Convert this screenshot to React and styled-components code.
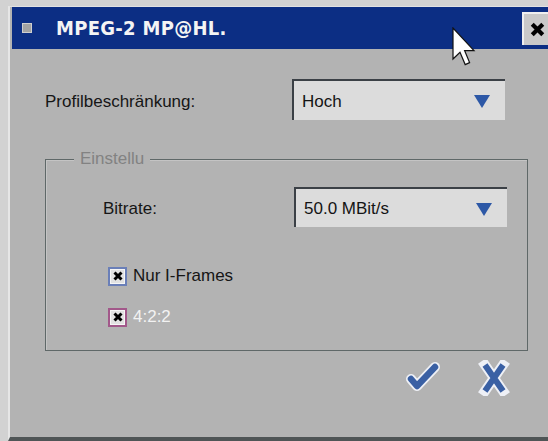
import styled, { createGlobalStyle } from "styled-components";

const GlobalStyle = createGlobalStyle`
  html, body {
    margin: 0;
    padding: 0;
    overflow: hidden;
    background: #d2d2d2;
  }
  body {
    font-family: "Liberation Sans", Arial, sans-serif;
  }
`;

const Window = styled.div`
  position: relative;
  margin: 6px 0 0 8px;
  width: 544px;
  height: 430px;
  padding-left: 2px;
  border-top: 1px solid #e2e2e2;
  border-left: 2px solid #e6e6e6;
  border-bottom: 4px solid #4f5556;
  background: #b3b3b3;
  display: flex;
  flex-direction: column;
`;

const TitleBar = styled.div`
  height: 42px;
  background: #0c2e84;
  display: flex;
  align-items: center;
  padding-left: 10px;
`;

const SysIcon = styled.span`
  width: 8px;
  height: 8px;
  background: #a3a3a3;
  border: 1px solid #cfcfcf;
`;

const Title = styled.h1`
  margin: 0 0 0 24px;
  font-family: "DejaVu Sans", sans-serif;
  font-stretch: condensed;
  font-weight: bold;
  font-size: 20px;
  color: #f4f4f4;
  letter-spacing: 0.3px;
`;

const CloseButton = styled.button`
  margin-left: auto;
  align-self: flex-start;
  margin-top: 5px;
  width: 34px;
  height: 33px;
  padding: 0 0 0 6px;
  display: flex;
  align-items: center;
  background: #c9c9c9;
  border: none;
  border-top: 2px solid #efefef;
  border-left: 2px solid #efefef;
`;

const Body = styled.div`
  flex: 1;
  padding: 30px 0 0 33px;
`;

const FieldRow = styled.div`
  display: grid;
  grid-template-columns: ${(p) => p.$labelWidth}px 213px;
  align-items: center;
`;

const Label = styled.span`
  font-size: 17px;
  color: #161616;
  padding-top: 4px;
`;

const Select = styled.div`
  height: ${(p) => p.$h}px;
  box-sizing: border-box;
  background: #dcdcdc;
  border-top: 2px solid #3b4046;
  border-left: 2px solid #3b4046;
  display: flex;
  align-items: center;
  justify-content: space-between;
  padding: 2px 15px 0 8px;
  font-size: 17px;
  color: #141414;
`;

const Arrow = styled.span`
  width: 0;
  height: 0;
  border-left: 8px solid transparent;
  border-right: 8px solid transparent;
  border-top: 13px solid #2d58a6;
`;

const Group = styled.div`
  position: relative;
  margin-top: 39px;
  box-sizing: border-box;
  width: 483px;
  height: 192px;
  border: 1px solid #5f6868;
  box-shadow: inset 1px 1px 0 #c4c4c4;
  padding: 27px 0 0 57px;
`;

const Legend = styled.span`
  position: absolute;
  top: -11px;
  left: 28px;
  padding: 0 6px;
  background: #b3b3b3;
  font-size: 17px;
  color: #828282;
`;

const Checks = styled.div`
  display: flex;
  flex-direction: column;
  gap: 21px;
  margin: 39px 0 0 5px;
`;

const CheckRow = styled.label`
  display: flex;
  align-items: center;
  gap: 6px;
  font-size: 17px;
  color: ${(p) => (p.$disabled ? "#f2f2f2" : "#161616")};
`;

const Box = styled.span`
  width: 15px;
  height: 15px;
  background: #e2e2e2;
  border: 2px solid ${(p) => p.$tone};
  box-shadow: inset 0 0 0 1px #f6f6f6;
  display: flex;
  align-items: center;
  justify-content: center;
`;

const Footer = styled.div`
  display: flex;
  align-items: flex-start;
  gap: 38px;
  margin: 9px 0 0 359px;
`;

const Cursor = styled.svg`
  position: absolute;
  left: 442px;
  top: 20px;
`;

function CrossMark({ size = 10, weight = 3 }) {
  return (
    <svg width={size} height={size} viewBox="0 0 10 10">
      <path d="M1.5 1.5 L8.5 8.5 M8.5 1.5 L1.5 8.5" stroke="#000" strokeWidth={weight} />
    </svg>
  );
}

function OkIcon() {
  return (
    <svg width="36" height="32" viewBox="0 0 36 32">
      <g fill="none" strokeLinecap="round" strokeLinejoin="round">
        <path d="M7 19 L13 26 L31 7" stroke="#eef0f6" strokeWidth="10" />
        <path d="M7 19 L13 26 L31 7" stroke="#3a60a4" strokeWidth="6.5" />
      </g>
    </svg>
  );
}

function CancelIcon() {
  return (
    <svg width="32" height="36" viewBox="0 0 32 36">
      <g stroke="#eef0f6" strokeWidth="10" strokeLinecap="square">
        <path d="M7 5 L25 31 M25 5 L7 31" />
      </g>
      <g stroke="#3a60a4" strokeWidth="6">
        <path d="M7 5 L25 31 M25 5 L7 31" />
      </g>
    </svg>
  );
}

export default function App() {
  return (
    <>
      <GlobalStyle />
      <Window>
        <TitleBar>
          <SysIcon />
          <Title>MPEG-2 MP@HL.</Title>
          <CloseButton aria-label="Schließen">
            <CrossMark size={15} weight={2.8} />
          </CloseButton>
        </TitleBar>
        <Body>
          <FieldRow $labelWidth={247}>
            <Label>Profilbeschränkung:</Label>
            <Select $h={41}>
              Hoch
              <Arrow />
            </Select>
          </FieldRow>
          <Group>
            <Legend>Einstellu</Legend>
            <FieldRow $labelWidth={191}>
              <Label>Bitrate:</Label>
              <Select $h={40}>
                50.0 MBit/s
                <Arrow />
              </Select>
            </FieldRow>
            <Checks>
              <CheckRow>
                <Box $tone="#6a7fb8">
                  <CrossMark />
                </Box>
                Nur I-Frames
              </CheckRow>
              <CheckRow $disabled>
                <Box $tone="#a2588a">
                  <CrossMark />
                </Box>
                4:2:2
              </CheckRow>
            </Checks>
          </Group>
          <Footer>
            <OkIcon />
            <CancelIcon />
          </Footer>
        </Body>
        <Cursor width="24" height="40" viewBox="0 0 12 20">
          <path
            d="M0.5 0.5 L0.5 16 L4 12.6 L6.6 18.8 L8.8 17.8 L6.3 11.8 L11 11.8 Z"
            fill="#fff"
            stroke="#111"
            strokeWidth="0.6"
          />
        </Cursor>
      </Window>
    </>
  );
}
